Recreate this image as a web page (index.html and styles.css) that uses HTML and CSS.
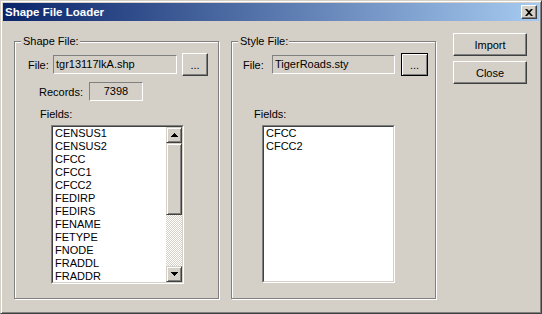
FILE: index.html
```html
<!DOCTYPE html>
<html lang="en">
<head>
    <meta charset="UTF-8">
    <meta name="viewport" content="width=device-width, initial-scale=1.0">
    <title>Shape File Loader</title>
    <link rel="stylesheet" href="styles.css">
</head>
<body>
    <div class="window">
        <div class="titlebar">
            <span class="title">Shape File Loader</span>
            <button class="close-btn" title="Close">
                <svg width="8" height="7" viewBox="0 0 8 7"><path d="M0 0h2l2 2 2-2h2L5 3.5 8 7H6L4 5 2 7H0l3-3.5z" fill="#000"/></svg>
            </button>
        </div>

        <div class="dialog">
            <fieldset class="group">
                <legend>Shape File:</legend>
                <div class="row file-row">
                    <label class="lbl shape-file-lbl">File:</label>
                    <div class="textbox shape-path">tgr13117lkA.shp</div>
                    <button class="btn browse shape-browse">...</button>
                </div>
                <div class="row records-row">
                    <label class="lbl records-lbl">Records:</label>
                    <div class="textbox records">7398</div>
                </div>
                <div class="fields-lbl shape-fields-lbl">Fields:</div>
                <div class="listbox shape-list">
                    <div class="listbox-inner">
                        <ul class="items">
                            <li>CENSUS1</li>
                            <li>CENSUS2</li>
                            <li>CFCC</li>
                            <li>CFCC1</li>
                            <li>CFCC2</li>
                            <li>FEDIRP</li>
                            <li>FEDIRS</li>
                            <li>FENAME</li>
                            <li>FETYPE</li>
                            <li>FNODE</li>
                            <li>FRADDL</li>
                            <li>FRADDR</li>
                        </ul>
                        <div class="scrollbar">
                            <div class="sb-btn">
                                <svg width="7" height="4" viewBox="0 0 7 4"><path d="M3 0h1v1h1v1h1v1h1v1H0V3h1V2h1V1h1z" fill="#000"/></svg>
                            </div>
                            <div class="sb-thumb"></div>
                            <div class="sb-track"></div>
                            <div class="sb-btn">
                                <svg width="7" height="4" viewBox="0 0 7 4"><path d="M0 0h7v1H6v1H5v1H4v1H3V3H2V2H1V1H0z" fill="#000"/></svg>
                            </div>
                        </div>
                    </div>
                </div>
            </fieldset>

            <fieldset class="group">
                <legend>Style File:</legend>
                <div class="row file-row">
                    <label class="lbl style-file-lbl">File:</label>
                    <div class="textbox style-path">TigerRoads.sty</div>
                    <button class="btn browse style-browse">...</button>
                </div>
                <div class="fields-lbl style-fields-lbl">Fields:</div>
                <div class="listbox style-list">
                    <div class="listbox-inner">
                        <ul class="items">
                            <li>CFCC</li>
                            <li>CFCC2</li>
                        </ul>
                    </div>
                </div>
            </fieldset>

            <div class="actions">
                <button class="btn action-btn">Import</button>
                <button class="btn action-btn">Close</button>
            </div>
        </div>
    </div>
</body>
</html>
```

FILE: styles.css
```css
* {
    box-sizing: border-box;
}
body {
    margin: 0;
    background-color: #d4d0c8;
    font-family: "Liberation Sans", Arial, sans-serif;
    font-size: 11px;
    color: #000;
}
.window {
    width: 542px;
    height: 314px;
    padding: 2px;
    background-color: #d4d0c8;
    border: 1px solid;
    border-color: #d4d0c8 #404040 #404040 #d4d0c8;
    box-shadow: inset 1px 1px #fff, inset -1px -1px #808080;
}
.titlebar {
    height: 18px;
    display: flex;
    align-items: center;
    justify-content: space-between;
    padding: 0 2px;
    background: linear-gradient(to right, #0a246a, #a6caf0);
}
.title {
    color: #fff;
    font-weight: bold;
    font-size: 11.5px;
}
.close-btn {
    width: 16px;
    height: 14px;
    padding: 0;
    display: flex;
    align-items: center;
    justify-content: center;
    background-color: #d4d0c8;
    border: 1px solid;
    border-color: #fff #404040 #404040 #fff;
    box-shadow: inset -1px -1px #808080;
}
.dialog {
    display: flex;
    align-items: flex-start;
    padding: 14px 0 0 11px;
}
.group {
    width: 205px;
    height: 264px;
    min-width: 0;
    margin: 0;
    padding: 0;
    border: 1px solid #808080;
    box-shadow: inset 1px 1px #fff, 1px 1px #fff;
}
.group + .group {
    margin-left: 12px;
}
legend {
    margin-left: 6px;
    padding: 0 1px 0 2px;
    line-height: 13px;
    background-color: #d4d0c8;
}
.row {
    display: flex;
    align-items: center;
}
.file-row {
    height: 23px;
    margin-top: 5px;
}
.shape-file-lbl {
    margin-left: 13px;
    width: 25px;
}
.style-file-lbl {
    margin-left: 11px;
    width: 29px;
}
.textbox {
    height: 19px;
    padding: 0 2px;
    line-height: 17px;
    white-space: nowrap;
    overflow: hidden;
    border: 1px solid;
    border-color: #808080 #fff #fff #808080;
}
.shape-path {
    width: 124px;
}
.style-path {
    width: 123px;
}
.btn {
    font: inherit;
    color: #000;
    padding: 0;
    background-color: #d4d0c8;
    border: 1px solid;
    border-color: #fff #404040 #404040 #fff;
    box-shadow: inset -1px -1px #808080;
}
.shape-browse {
    width: 26px;
    height: 23px;
    margin-left: 5px;
}
.style-browse {
    width: 27px;
    height: 23px;
    margin-left: 6px;
    border-color: #000;
    box-shadow: inset 1px 1px #fff, inset -1px -1px #808080;
}
.records-row {
    margin-top: 6px;
}
.records-lbl {
    margin-left: 24px;
    width: 50px;
}
.records {
    width: 54px;
    text-align: center;
}
.fields-lbl {
    line-height: 13px;
}
.shape-fields-lbl {
    margin: 7px 0 0 25px;
}
.style-fields-lbl {
    margin: 32px 0 0 22px;
}
.listbox {
    margin-top: 4px;
    width: 133px;
    background-color: #fff;
    border: 1px solid;
    border-color: #808080 #fff #fff #808080;
}
.shape-list {
    margin-left: 36px;
    height: 159px;
}
.style-list {
    margin-left: 30px;
    height: 158px;
}
.listbox-inner {
    height: 100%;
    display: flex;
    border: 1px solid;
    border-color: #404040 #d4d0c8 #d4d0c8 #404040;
}
.items {
    flex: 1;
    list-style: none;
    margin: 0;
    padding: 0 0 0 2px;
    overflow: hidden;
    line-height: 13px;
}
.scrollbar {
    width: 16px;
    display: flex;
    flex-direction: column;
}
.sb-btn,
.sb-thumb {
    background-color: #d4d0c8;
    border: 1px solid;
    border-color: #d4d0c8 #404040 #404040 #d4d0c8;
    box-shadow: inset 1px 1px #fff, inset -1px -1px #808080;
}
.sb-btn {
    height: 16px;
    display: flex;
    align-items: center;
    justify-content: center;
}
.sb-thumb {
    height: 72px;
}
.sb-track {
    flex: 1;
    background: repeating-conic-gradient(#fff 0 25%, #d4d0c8 0 50%) 0 0 / 2px 2px;
}
.actions {
    display: flex;
    flex-direction: column;
    gap: 5px;
    margin: -2px 0 0 17px;
}
.action-btn {
    width: 74px;
    height: 23px;
}
```
